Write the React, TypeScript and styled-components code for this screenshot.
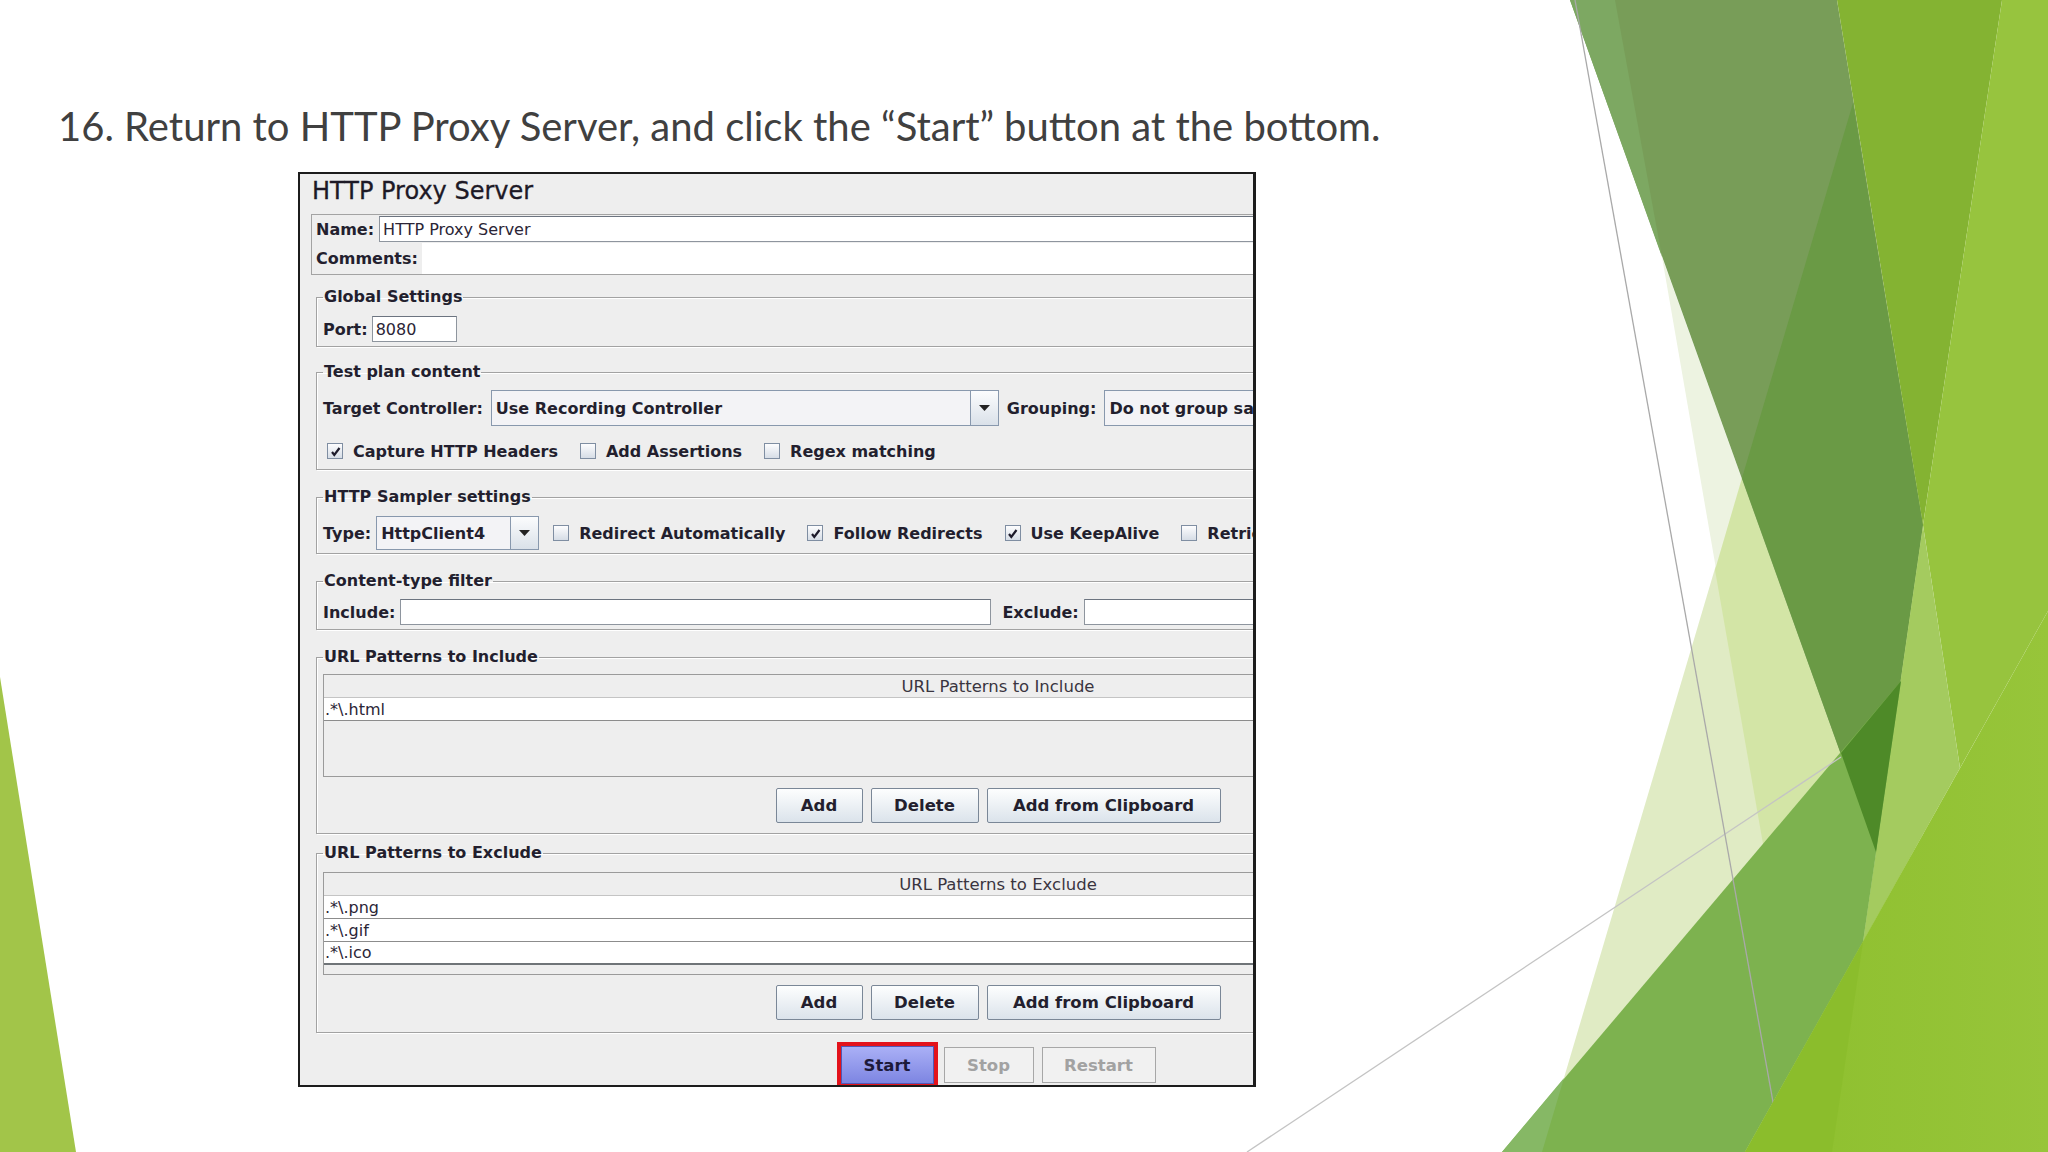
import styled, { createGlobalStyle } from "styled-components";

const GlobalStyle = createGlobalStyle`
  html, body {
    margin: 0;
    padding: 0;
    background: #ffffff;
  }
  * {
    box-sizing: border-box;
  }
`;

// decorative facets on the right side of the slide (2048x1152 coords)
const facets: { points: string; fill: string }[] = [
  { points: "1853,103 1542,1152 1900,1152 1923,525", fill: "#E0EBC4" },
  { points: "1662,257 1876,852 1840,1152 1817,1152", fill: "#EDF3E1" },
  { points: "1715,570 1742,478 1876,852 1840,1152 1817,1152", fill: "#D3E5A6" },
  { points: "1570,0 1837,0 1923,525 1876,852", fill: "#789D58" },
  { points: "1570,0 1615,0 1662,257", fill: "#7DA862" },
  { points: "1853,103 1923,525 1876,852 1742,478", fill: "#6A9A45" },
  { points: "1837,0 2002,0 1923,525", fill: "#84B332" },
  { points: "2002,0 2048,0 2048,611 1960,768 1923,525", fill: "#97C43E" },
  { points: "1923,525 1960,768 1863,942", fill: "#A4CB5F" },
  { points: "1502,1152 1901,681 1863,942 1745,1152", fill: "#7DB24F" },
  { points: "1502,1152 1564,1078 1542,1152", fill: "#86B865" },
  { points: "1841,753 1901,681 1876,852", fill: "#4E8A28" },
];

const Slide = styled.div`
  position: relative;
  width: 2048px;
  height: 1152px;
  overflow: hidden;
  background: #ffffff;
`;

const Backdrop = styled.svg`
  position: absolute;
  left: 0;
  top: 0;
  width: 2048px;
  height: 1152px;
`;

const Content = styled.div`
  position: relative;
  display: flex;
  flex-direction: column;
  align-items: flex-start;
`;

const Heading = styled.h1`
  margin: 102px 0 0 58px;
  font-family: Lato, "Open Sans", sans-serif;
  font-weight: 400;
  font-size: 40px;
  line-height: 48px;
  color: #404040;
  white-space: nowrap;
`;

const Frame = styled.div`
  margin: 22px 0 0 298px;
  width: 958px;
  height: 915px;
  border: 2px solid #1c1c1c;
  border-right-width: 3px;
  background: #eeeeee;
  overflow: hidden;
  font-family: "DejaVu Sans", sans-serif;
  color: #231f2e;
`;

const Panel = styled.div`
  width: 1396px;
  padding: 3px 11px 0 11px;
  display: flex;
  flex-direction: column;
`;

const Title = styled.div`
  margin-left: 1px;
  font-size: 24px;
  line-height: 28px;
  color: #1d1926;
  -webkit-text-stroke: 0.3px #1d1926;
`;

const NameBox = styled.div`
  margin-top: 9px;
  height: 61px;
  border: 1px solid #a3a3a3;
  display: flex;
  flex-direction: column;
`;

const NameRow = styled.div`
  height: 27px;
  padding: 1px 0 0 4px;
  display: flex;
  align-items: stretch;
  gap: 5px;
`;

const CommentsRow = styled.div`
  height: 32px;
  padding-left: 4px;
  display: flex;
  align-items: center;
  gap: 4px;
`;

const CommentsArea = styled.div`
  flex: 1;
  align-self: stretch;
  margin-top: 1px;
  background: #ffffff;
`;

const Label = styled.span`
  flex: none;
  font-size: 16px;
  font-weight: 700;
  white-space: nowrap;
  display: flex;
  align-items: center;
`;

const Field = styled.div<{ $w?: number }>`
  flex: ${(p) => (p.$w ? "none" : "1")};
  width: ${(p) => (p.$w ? `${p.$w}px` : "auto")};
  height: 26px;
  border: 1px solid #8e959e;
  border-top-color: #6c7480;
  background: #ffffff;
  padding-left: 3px;
  font-size: 16px;
  color: #2b2536;
  display: flex;
  align-items: center;
  white-space: nowrap;
`;

const Group = styled.fieldset<{ $mt: number; $pt: number; $pb: number }>`
  margin: ${(p) => p.$mt}px 5px 0 5px;
  padding: ${(p) => p.$pt}px 6px ${(p) => p.$pb}px 6px;
  min-width: 0;
  border: 1px solid #a2a2a2;
  box-shadow: inset 1px 1px 0 #ffffff, 1px 1px 0 #ffffff;
  display: flex;
  flex-direction: column;
`;

const Legend = styled.legend`
  padding: 0 1px;
  font-size: 16px;
  font-weight: 700;
  line-height: 20px;
  color: #231f2e;
`;

const Row = styled.div<{ $h: number; $gap?: number; $mt?: number }>`
  flex: none;
  height: ${(p) => p.$h}px;
  margin-top: ${(p) => p.$mt ?? 0}px;
  display: flex;
  align-items: center;
  gap: ${(p) => p.$gap ?? 8}px;
`;

const Combo = styled.div<{ $w: number; $h: number }>`
  flex: none;
  width: ${(p) => p.$w}px;
  height: ${(p) => p.$h}px;
  border: 1px solid #8898ad;
  background: #f3f3f6;
  display: flex;
`;

const ComboText = styled.span`
  flex: 1;
  padding-left: 4px;
  font-size: 16px;
  font-weight: 700;
  white-space: nowrap;
  overflow: hidden;
  display: flex;
  align-items: center;
`;

const ComboArrow = styled.span`
  flex: none;
  width: 28px;
  border-left: 1px solid #8898ad;
  background: linear-gradient(#fbfcfd, #dae1e9);
  display: flex;
  align-items: center;
  justify-content: center;
`;

const Checks = styled.div<{ $ml?: number }>`
  margin-left: ${(p) => p.$ml ?? 0}px;
  display: flex;
  align-items: center;
  gap: 22px;
`;

const CheckItem = styled.label`
  display: flex;
  align-items: center;
  gap: 10px;
  font-size: 16px;
  font-weight: 700;
  white-space: nowrap;
`;

const Box = styled.span`
  flex: none;
  width: 16px;
  height: 16px;
  border: 1px solid #7f8ea2;
  background: linear-gradient(#fdfdfe, #d6dde6);
  display: flex;
  align-items: center;
  justify-content: center;
`;

const Table = styled.div<{ $h: number }>`
  flex: none;
  height: ${(p) => p.$h}px;
  border: 1px solid #9a9a9a;
  background: #eeeeee;
  display: flex;
  flex-direction: column;
`;

const TableHead = styled.div`
  height: 23px;
  flex: none;
  border-bottom: 1px solid #c4c4c4;
  display: flex;
  align-items: center;
  justify-content: center;
  font-size: 16.5px;
  color: #3a3540;
`;

const TableRow = styled.div<{ $last?: boolean }>`
  height: 23px;
  flex: none;
  background: #ffffff;
  border-bottom: ${(p) => (p.$last ? "2px solid #6f7478" : "1px solid #8c8c8c")};
  padding-left: 1px;
  font-size: 16px;
  color: #2b2536;
  display: flex;
  align-items: center;
`;

const ButtonBar = styled.div<{ $mt: number }>`
  flex: none;
  margin-top: ${(p) => p.$mt}px;
  display: flex;
  justify-content: center;
  gap: 8px;
`;

const Btn = styled.button<{ $w: number }>`
  width: ${(p) => p.$w}px;
  height: 35px;
  padding: 0;
  border: 1px solid #7a8797;
  border-radius: 2px;
  background: linear-gradient(#fdfefe, #dbe3eb);
  font-family: "DejaVu Sans", sans-serif;
  font-size: 16.5px;
  font-weight: 700;
  color: #231f2e;
`;

const RunBar = styled.div`
  margin-top: 13px;
  display: flex;
  justify-content: center;
  align-items: center;
  gap: 8px;
`;

const RunBtn = styled.button<{ $w: number; $active?: boolean }>`
  width: ${(p) => p.$w}px;
  height: ${(p) => (p.$active ? 38 : 36)}px;
  padding: 0;
  border: 1px solid ${(p) => (p.$active ? "#4f58b6" : "#a7a7a7")};
  outline: ${(p) => (p.$active ? "4px solid #e3121b" : "none")};
  margin-right: ${(p) => (p.$active ? 2 : 0)}px;
  background: ${(p) =>
    p.$active ? "linear-gradient(#aab0f6, #7d85e2)" : "#f1f1f1"};
  font-family: "DejaVu Sans", sans-serif;
  font-size: 16.5px;
  font-weight: 700;
  color: ${(p) => (p.$active ? "#1d1a3a" : "#a2a2a2")};
`;

function Arrow() {
  return (
    <svg width="11" height="6" viewBox="0 0 11 6">
      <path d="M0 0 H11 L5.5 6 Z" fill="#222" />
    </svg>
  );
}

function Check({ on, label }: { on?: boolean; label: string }) {
  return (
    <CheckItem>
      <Box>
        {on && (
          <svg width="11" height="11" viewBox="0 0 11 11">
            <path
              d="M2 6 L4.3 9 L9.5 2"
              fill="none"
              stroke="#1d1b2b"
              strokeWidth="2.2"
            />
          </svg>
        )}
      </Box>
      {label}
    </CheckItem>
  );
}

export default function App() {
  return (
    <>
      <GlobalStyle />
      <Slide>
        <Backdrop viewBox="0 0 2048 1152">
          <defs>
            <linearGradient id="lime" x1="0" y1="0" x2="1" y2="0">
              <stop offset="0" stopColor="#8dbf2d" />
              <stop offset="1" stopColor="#97c53a" />
            </linearGradient>
          </defs>
          {facets.map((f) => (
            <polygon key={f.points} points={f.points} fill={f.fill} />
          ))}
          <line x1="1247" y1="1152" x2="1841" y2="757" stroke="#c4c4c4" strokeWidth="1.3" />
          <line x1="1575" y1="0" x2="1782" y2="1152" stroke="#a9a9a9" strokeWidth="1.3" />
          <polygon points="1745,1152 2048,611 2048,1152" fill="url(#lime)" />
          <polygon points="1745,1152 1863,942 1832,1152" fill="#8bbd2c" />
          <polygon points="0,677 76,1152 0,1152" fill="#A2C549" />
        </Backdrop>

        <Content>
          <Heading>
            16. Return to HTTP Proxy Server, and click the “Start” button at the bottom.
          </Heading>

          <Frame>
            <Panel>
              <Title>HTTP Proxy Server</Title>

              <NameBox>
                <NameRow>
                  <Label>Name:</Label>
                  <Field>HTTP Proxy Server</Field>
                </NameRow>
                <CommentsRow>
                  <Label>Comments:</Label>
                  <CommentsArea />
                </CommentsRow>
              </NameBox>

              <Group $mt={12} $pt={9} $pb={4}>
                <Legend>Global Settings</Legend>
                <Row $h={26} $gap={4}>
                  <Label>Port:</Label>
                  <Field $w={85}>8080</Field>
                </Row>
              </Group>

              <Group $mt={15} $pt={8} $pb={7}>
                <Legend>Test plan content</Legend>
                <Row $h={36}>
                  <Label>Target Controller:</Label>
                  <Combo $w={508} $h={36}>
                    <ComboText>Use Recording Controller</ComboText>
                    <ComboArrow>
                      <Arrow />
                    </ComboArrow>
                  </Combo>
                  <Label>Grouping:</Label>
                  <Combo $w={320} $h={36}>
                    <ComboText>Do not group samplers</ComboText>
                    <ComboArrow>
                      <Arrow />
                    </ComboArrow>
                  </Combo>
                </Row>
                <Row $h={22} $mt={14}>
                  <Checks $ml={4}>
                    <Check on label="Capture HTTP Headers" />
                    <Check label="Add Assertions" />
                    <Check label="Regex matching" />
                  </Checks>
                </Row>
              </Group>

              <Group $mt={17} $pt={9} $pb={3}>
                <Legend>HTTP Sampler settings</Legend>
                <Row $h={34} $gap={5}>
                  <Label>Type:</Label>
                  <Combo $w={163} $h={34}>
                    <ComboText>HttpClient4</ComboText>
                    <ComboArrow>
                      <Arrow />
                    </ComboArrow>
                  </Combo>
                  <Checks $ml={9}>
                    <Check label="Redirect Automatically" />
                    <Check on label="Follow Redirects" />
                    <Check on label="Use KeepAlive" />
                    <Check label="Retrieve All Embedded Resources" />
                  </Checks>
                </Row>
              </Group>

              <Group $mt={17} $pt={8} $pb={4}>
                <Legend>Content-type filter</Legend>
                <Row $h={26} $gap={5}>
                  <Label>Include:</Label>
                  <Field $w={591} />
                  <Label style={{ marginLeft: 6 }}>Exclude:</Label>
                  <Field />
                </Row>
              </Group>

              <Group $mt={17} $pt={7} $pb={10}>
                <Legend>URL Patterns to Include</Legend>
                <Table $h={103}>
                  <TableHead>URL Patterns to Include</TableHead>
                  <TableRow>.*\.html</TableRow>
                </Table>
                <ButtonBar $mt={11}>
                  <Btn $w={87}>Add</Btn>
                  <Btn $w={108}>Delete</Btn>
                  <Btn $w={234}>Add from Clipboard</Btn>
                </ButtonBar>
              </Group>

              <Group $mt={9} $pt={9} $pb={12}>
                <Legend>URL Patterns to Exclude</Legend>
                <Table $h={103}>
                  <TableHead>URL Patterns to Exclude</TableHead>
                  <TableRow>.*\.png</TableRow>
                  <TableRow>.*\.gif</TableRow>
                  <TableRow $last>.*\.ico</TableRow>
                </Table>
                <ButtonBar $mt={10}>
                  <Btn $w={87}>Add</Btn>
                  <Btn $w={108}>Delete</Btn>
                  <Btn $w={234}>Add from Clipboard</Btn>
                </ButtonBar>
              </Group>

              <RunBar>
                <RunBtn $w={93} $active>
                  Start
                </RunBtn>
                <RunBtn $w={90}>Stop</RunBtn>
                <RunBtn $w={114}>Restart</RunBtn>
              </RunBar>
            </Panel>
          </Frame>
        </Content>
      </Slide>
    </>
  );
}
